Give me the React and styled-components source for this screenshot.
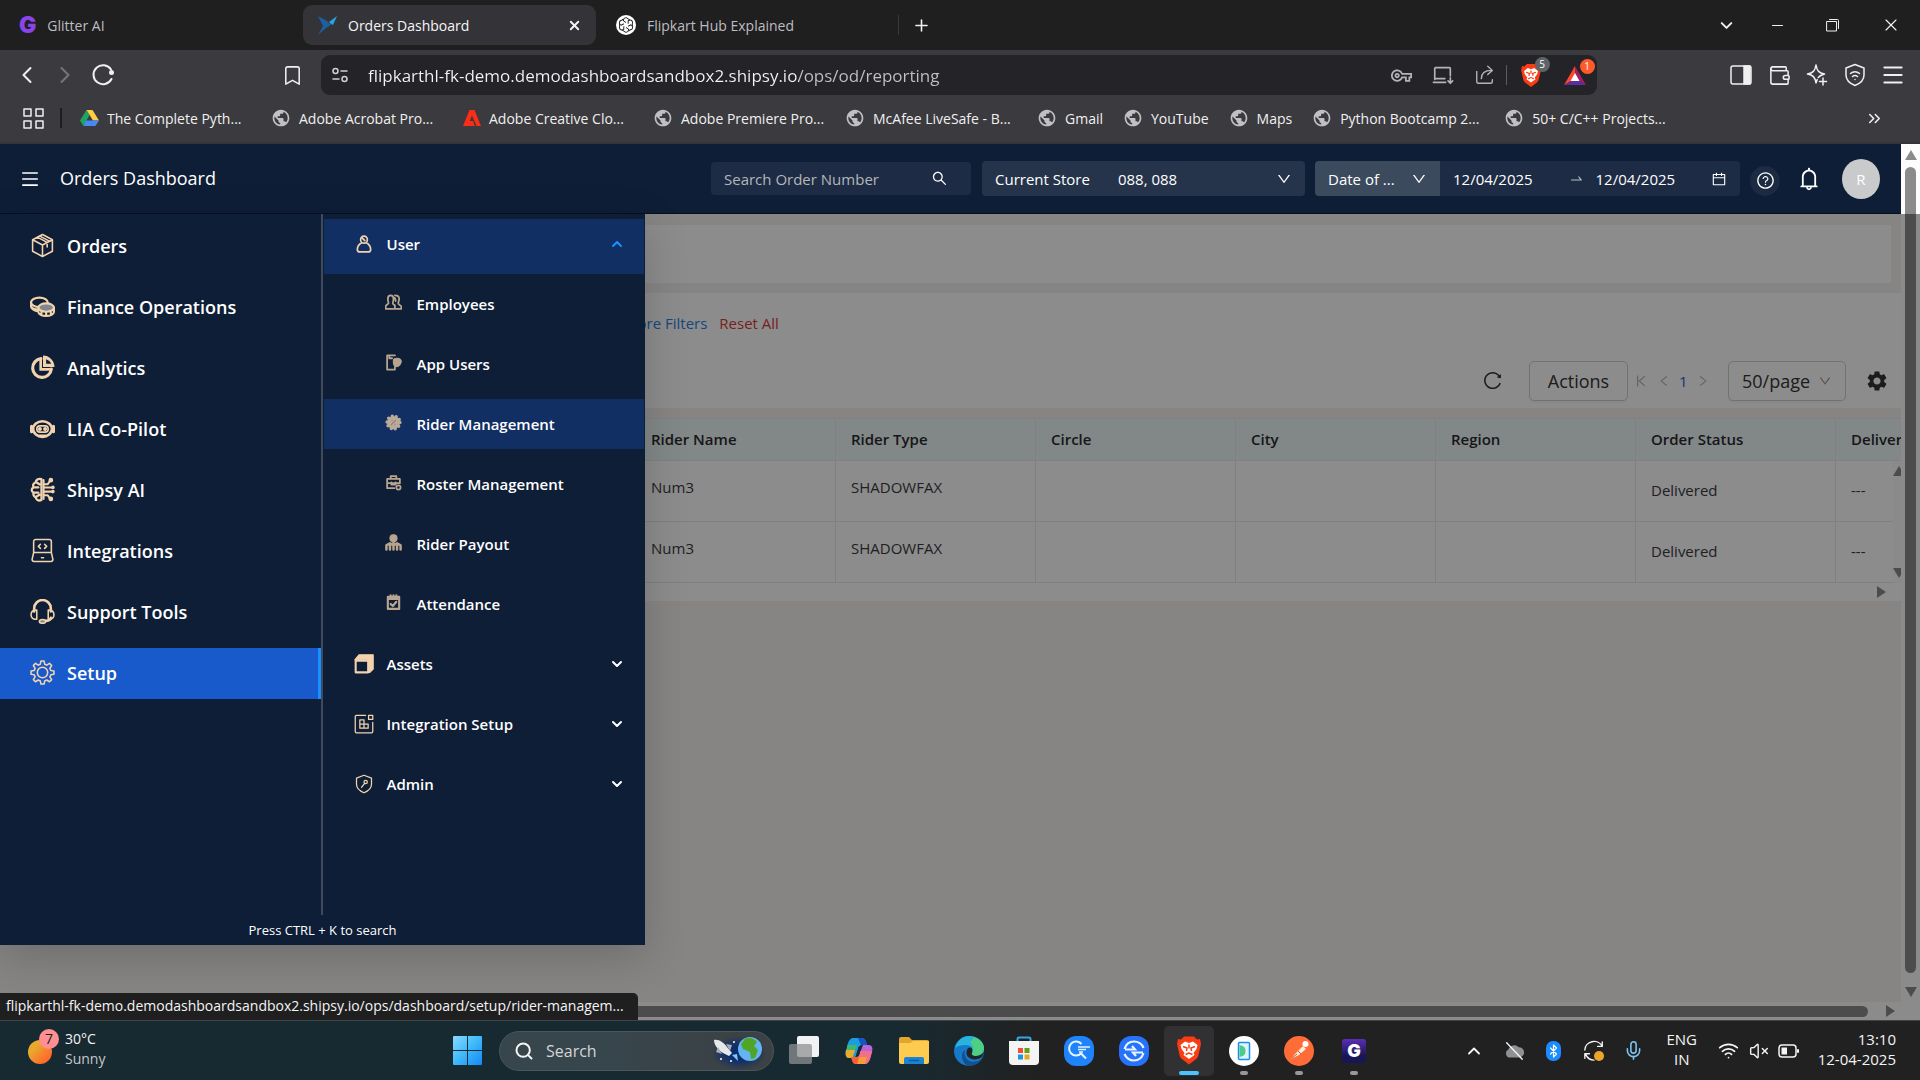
import React from 'react';
import styled, { createGlobalStyle } from 'styled-components';
import {
  AiOutlineBell,
  AiOutlineCalendar,
  AiOutlineDown,
  AiOutlineLeft,
  AiOutlineMenu,
  AiOutlineQuestionCircle,
  AiOutlineReload,
  AiOutlineRight,
  AiOutlineSearch,
  AiOutlineSwapRight,
  AiOutlineVerticalRight,
} from 'react-icons/ai';
import { MdPublic, MdOutlineVpnKey, MdSettings } from 'react-icons/md';
import {
  Bookmark,
  ChevronDown,
  ChevronLeft,
  ChevronRight,
  ChevronUp,
  ChevronsRight,
  Menu,
  Mic,
  Minus,
  Plus,
  Search,
  VolumeX,
  Wallet,
  Wifi,
  X,
} from 'lucide-react';

const GlobalStyle = createGlobalStyle`
  * { box-sizing: border-box; }
  body {
    margin: 0;
    background: #1f1f20;
    font-family: 'Open Sans', 'Noto Sans', sans-serif;
  }
  button, input, select {
    font: inherit;
    color: inherit;
    background: none;
    border: 0;
    padding: 0;
    margin: 0;
    min-width: 0;
    outline: none;
  }
  select { appearance: none; }
  a { color: inherit; text-decoration: none; }
  svg { display: block; flex: none; }
`

const Desktop = styled.div`
  display: flex;
  flex-direction: column;
  min-height: 100vh;
  overflow: hidden;
`

/* ---------- browser chrome ---------- */

const Chrome = styled.header`
  color: #f0f0f1;
  background: #3b3a3e;
  border-bottom: 2px solid #363537;
`

const TabStrip = styled.div`
  display: flex;
  align-items: center;
  height: 50px;
  padding-left: 5px;
  background: #1f1f20;
`

const Tab = styled.button`
  display: flex;
  align-items: center;
  gap: 11px;
  flex: 0 1 ${p => p.$width}px;
  height: 40px;
  padding: 0 14px;
  margin-right: ${p => (p.$active ? 6 : 0)}px;
  border-radius: 9px;
  font-size: 14px;
  text-align: left;
  color: ${p => (p.$active ? '#f6f6f7' : '#bdbdc0')};
  background: ${p => (p.$active ? '#343338' : 'transparent')};
`

const TabTitle = styled.span`
  flex: 1;
  white-space: nowrap;
`

const IconButton = styled.button`
  display: flex;
  align-items: center;
  justify-content: center;
  flex: none;
  width: ${p => p.$width || 38}px;
  height: 38px;
  color: ${p => p.$color || '#f0f0f1'};
`

const Divider = styled.span`
  width: ${p => p.$thick || 1}px;
  height: 20px;
  background: ${p => p.$color || '#5c5b60'};
`

const WindowButtons = styled.div`
  display: flex;
  margin-left: auto;
`

const Toolbar = styled.div`
  display: flex;
  align-items: center;
  height: 50px;
  padding: 0 8px;
`

const ToolGap = styled.span`
  flex: none;
  width: ${p => p.$width}px;
`

const AddressBar = styled.div`
  display: flex;
  align-items: center;
  flex: 1;
  height: 40px;
  margin-left: 10px;
  padding: 0 2px 0 10px;
  border-radius: 9px;
  background: #242328;
`

const Url = styled.input`
  flex: 1;
  height: 30px;
  margin-left: 19px;
  font-size: 17px;
  color: transparent;
  background: linear-gradient(90deg, #f4f4f5 431px, #c2c2c6 431px);
  background-clip: text;
`

const Badged = styled.span`
  position: relative;
  display: flex;
`

const Badge = styled.span`
  position: absolute;
  top: -7px;
  right: -9px;
  width: 15px;
  height: 15px;
  border-radius: 8px;
  font-size: 10px;
  line-height: 15px;
  text-align: center;
  color: #fff;
  background: ${p => p.$color};
`

const SideTools = styled.div`
  display: flex;
  margin-left: 125px;
`

const Bookmarks = styled.nav`
  display: flex;
  align-items: center;
  gap: 20px;
  height: 42px;
  padding: 0 36px 6px 23px;
  font-size: 14px;
  white-space: nowrap;
`

const BookmarkLead = styled.div`
  display: flex;
  align-items: center;
  gap: 16px;
  margin-right: -2px;
`

const BookmarkLink = styled.a`
  display: flex;
  align-items: center;
  gap: 8px;

  span { min-width: ${p => (p.$long ? 144 : 0)}px; }
`

const More = styled.button`
  margin-left: auto;
`

/* ---------- application ---------- */

const Viewport = styled.main`
  position: relative;
  display: flex;
  flex: 1;
`

const Page = styled.div`
  display: flex;
  flex-direction: column;
  flex: 1;
  min-width: 0;
  background: #f6f3ef;
`

const AppHeader = styled.div`
  display: flex;
  align-items: center;
  height: 70px;
  padding: 0 21px 0 20px;
  color: #fff;
  background: #0e1e37;
  border-bottom: 1px solid #08101f;
`

const AppTitle = styled.h1`
  margin: 0 auto 0 20px;
  padding-bottom: 2px;
  font-size: 18px;
  font-weight: 400;
`

const HeaderField = styled.div`
  display: flex;
  align-items: center;
  width: ${p => p.$width}px;
  height: ${p => p.$height || 35}px;
  padding: 0 13px;
  margin-right: ${p => p.$gap || 0}px;
  font-size: 15px;
  border-radius: ${p => p.$radius || '4px'};
  background: ${p => p.$bg};

  label { margin-right: 28px; white-space: nowrap; }
  input, select { flex: 1; width: 0; }
  input::placeholder { color: #b3b6bb; opacity: 1; }
`

const HelpButton = styled.button`
  display: grid;
  place-items: center;
  width: 30px;
  height: 30px;
  margin: 4px 16px 0 10px;
  border-radius: 50%;
  background: #1c2a42;
`

const Avatar = styled.button`
  width: 38px;
  height: 40px;
  margin-left: 20px;
  border-radius: 50%;
  font-size: 15px;
  color: #fff;
  background: #c9cacb;
`

const Card = styled.section`
  margin: ${p => p.$margin};
  height: ${p => p.$height}px;
  background: #fff;
`

const Filters = styled.div`
  display: flex;
  gap: 12px;
  height: 60px;
  padding-left: 624px;
  align-items: center;
  font-size: 15px;
`

const FilterLink = styled.button`
  white-space: nowrap;
  color: ${p => p.$color};
`

const TableTools = styled.div`
  display: flex;
  align-items: center;
  justify-content: flex-end;
  height: 55px;
  padding-right: 12px;
  font-size: 18px;
  color: #333;
`

const Outlined = styled.div`
  display: flex;
  align-items: center;
  justify-content: ${p => (p.$spread ? 'space-between' : 'center')};
  width: ${p => p.$width}px;
  height: 40px;
  padding: 0 13px;
  border: 1px solid #d0d0d0;
  border-radius: 5px;
  box-shadow: 0 2px 0 rgba(0, 0, 0, .03);
`

const Pager = styled.div`
  display: flex;
  align-items: center;
  gap: 8px;
  width: 100px;
  padding-left: 5px;
  font-size: 15px;
  color: #b8b8b8;

  strong { font-weight: 500; color: #1f5fd0; }
`

const TableWrap = styled.div`
  position: relative;
  overflow: hidden;
  background: #fff;
`

const Table = styled.table`
  width: 2035px;
  table-layout: fixed;
  border-collapse: collapse;
  font-size: 15px;
  text-align: left;

  col { width: 200px; }
  col:first-child { width: 635px; }
  tr { height: 61px; }
  thead tr { height: 42px; background: #edf7f7; }
  th { font-weight: 600; color: #2b2b30; }
  th, td {
    padding: 0 15px;
    border: 1px solid #e9eaec;
  }
  th { padding-bottom: 2px; }
  td { padding-bottom: 8px; color: #3b3b3f; }
  td:nth-last-child(-n + 2) { padding-bottom: 3px; }
`

const TableTrack = styled.div`
  display: flex;
  justify-content: flex-end;
  align-items: center;
  height: 18px;
  padding-right: 15px;
`

const RowTrack = styled.div`
  position: absolute;
  top: 43px;
  right: 0;
  bottom: 18px;
  width: 8px;
  padding: 5px 0;
  display: flex;
  flex-direction: column;
  justify-content: space-between;
  overflow: hidden;
  background: #fcfcfc;
`

const Arrow = styled.i`
  flex: none;
  width: 0;
  height: 0;
  border: 6px solid transparent;
  ${p => p.$dir === 'up' && 'border-top: 0; border-bottom: 10px solid #8b8b8b;'}
  ${p => p.$dir === 'down' && 'border-bottom: 0; border-top: 10px solid #8b8b8b;'}
  ${p => p.$dir === 'right' && 'border-right: 0; border-left: 9px solid #8b8b8b;'}
`

const ScrollY = styled.div`
  display: flex;
  flex-direction: column;
  align-items: center;
  gap: 7px;
  width: 19px;
  padding: 6px 0 23px;
  background: #fdfdfd;
`

const ScrollX = styled.div`
  display: flex;
  align-items: center;
  gap: 18px;
  height: 18px;
  margin-top: auto;
  padding: 0 6px 0 20px;
  background: #fdfdfd;
`

const Thumb = styled.div`
  flex: 1;
  min-width: 11px;
  min-height: 11px;
  border-radius: 6px;
  background: #8b8b8b;
`

const Mask = styled.div`
  position: absolute;
  inset: 70px 0 0;
  background: rgba(0, 0, 0, .45);
`

const Drawer = styled.nav`
  position: absolute;
  top: 70px;
  left: 0;
  width: 645px;
  color: #fff;
  background: #0e1e37;
  box-shadow: 0 12px 40px rgba(0, 0, 0, .18);
`

const Columns = styled.div`
  display: flex;
  min-height: 701px;
`

const Primary = styled.div`
  display: flex;
  flex-direction: column;
  gap: 10px;
  flex: 1;
  padding-top: 7px;
  border-right: 2px solid #414a5c;
`

const PrimaryItem = styled.a`
  display: flex;
  align-items: center;
  gap: 12px;
  height: 51px;
  padding: 0 0 2px 30px;
  font-size: 18px;
  font-weight: 600;
  background: ${p => (p.$active ? '#185acb' : 'transparent')};
  border-right: ${p => (p.$active ? '3px solid #1890ff' : '0')};
`

const Secondary = styled.div`
  display: flex;
  flex-direction: column;
  gap: 10px;
  flex: 1;
  padding: 5px 1px 0;
  font-size: 15px;
  font-weight: 600;
`

const Group = styled.button`
  display: flex;
  align-items: center;
  gap: 13px;
  height: ${p => (p.$open ? 55 : 50)}px;
  margin-bottom: ${p => (p.$open ? -5 : 0)}px;
  padding: 0 19px ${p => (p.$open ? 5 : 0)}px 30px;
  text-align: left;
  background: ${p => (p.$open ? '#112f63' : 'transparent')};

  span { flex: 1; }
`

const SubItem = styled.a`
  display: flex;
  align-items: center;
  gap: 15px;
  height: 50px;
  padding-left: 61px;
  background: ${p => (p.$active ? '#112f63' : 'transparent')};

  svg { opacity: .75; margin-bottom: 3px; }
`

const Hint = styled.p`
  margin: 0;
  height: 30px;
  font-size: 13px;
  line-height: 30px;
  text-align: center;
`

const StatusBubble = styled.div`
  position: absolute;
  left: 0;
  bottom: 0;
  min-width: 638px;
  height: 27px;
  padding: 0 7px 0 6px;
  border-radius: 0 5px 0 0;
  font-size: 14px;
  line-height: 26px;
  color: #f4f4f5;
  background: #1f1f20;
`

/* ---------- taskbar ---------- */

const Taskbar = styled.footer`
  display: flex;
  align-items: center;
  gap: 5px;
  height: 60px;
  font-size: 15px;
  color: #f4f4f4;
  background: linear-gradient(90deg, #182a31 0, #182a31 47%, #212121 54%);
  border-top: 1px solid #3d4547;
`

const Weather = styled.button`
  display: flex;
  gap: 6px;
  flex: 0 1 437px;
  padding: 0 0 4px 27px;
  text-align: left;
  font-size: 14px;
  line-height: 20px;

  small { display: block; font-size: 14px; color: #c3c8ca; }
`

const TaskSearch = styled.label`
  display: flex;
  align-items: center;
  gap: 12px;
  width: 275px;
  height: 40px;
  margin-left: 2px;
  padding: 0 8px 0 14px;
  border-radius: 20px;
  border: 1px solid #4a565c;
  background: linear-gradient(90deg, #37454c 40%, #3c4144);
  font-size: 16px;

  input { flex: 1; width: 0; }
  input::placeholder { color: #d3d6d8; opacity: 1; }
`

const TaskButton = styled.button`
  position: relative;
  display: grid;
  place-items: center;
  width: 50px;
  height: 50px;
  border-radius: 5px;
  background: ${p => (p.$active ? '#313134' : 'transparent')};

  &:after {
    content: '';
    position: absolute;
    bottom: 1px;
    width: ${p => (p.$active ? 20 : 8)}px;
    height: 4px;
    border-radius: 2px;
    background: ${p => (p.$active ? '#4cc2ff' : p.$running ? '#97989b' : 'transparent')};
  }
`

const Tray = styled.div`
  display: flex;
  align-items: center;
  margin-left: auto;
  padding-right: 24px;
  line-height: 20px;
`

const TrayIcon = styled.button`
  display: grid;
  place-items: center;
  width: ${p => p.$width || 40}px;
  height: 40px;
`

const Language = styled.button`
  width: 56px;
  padding-bottom: 3px;
  text-align: center;
`

const Clock = styled.time`
  margin-left: 14px;
  padding-bottom: 3px;
  text-align: right;
`

const GMark = styled.span`
  font-family: Inter, sans-serif;
  font-weight: 900;
  line-height: 1;
  font-size: ${p => p.$size}px;
  color: ${p => p.$color};
`

const GTile = styled.span`
  display: grid;
  place-items: center;
  width: 24px;
  height: 24px;
  border-radius: 3px;
  background: linear-gradient(#5b2fb5, #181655 70%);
`

/* ---------- drawings ---------- */

const beige = '#f2d3ad';

const Svg = ({ size = 24, w, h, box = '0 0 24 24', children, ...rest }) => (
  <svg width={w || size} height={h || size} viewBox={box} fill="none" stroke="currentColor"
    strokeWidth="1.5" strokeLinecap="round" strokeLinejoin="round" aria-hidden="true" {...rest}>
    {children}
  </svg>
);

const menuArt = {
  box: (
    <>
      <path d="M12 1.500 21.500 6.500v11L12 22.500 2.500 17.500v-11zM2.500 6.500 12 11.500l9.500-5M12 11.500v11M7 4l9.500 5v4.500" />
      <path d="M9.500 3 19 8" />
    </>
  ),
  coins: (
    <>
      <ellipse cx="9" cy="8" rx="8" ry="4.500" strokeWidth="2" />
      <path d="M1 8v4c0 2 3 4 6 4.500M1 11c0 2 3 3.500 6 4" strokeWidth="2" />
      <ellipse cx="15.500" cy="13" rx="7.500" ry="4" strokeWidth="2" fill="#7f8794" />
      <path d="M8 13v4c0 2.500 3.500 4 7.500 4s7.500-1.500 7.500-4v-4M11 17v3M15.500 17.500V21M20 17v3" strokeWidth="2" />
    </>
  ),
  pie: (
    <>
      <path d="M10.500 3.500A9 9 0 1 0 20.500 13.500" strokeWidth="3" />
      <path d="M9 4h2.500v8.500H20V15H9z" fill="currentColor" stroke="none" />
      <path d="M12.500.5A11 11 0 0 1 23.500 11.500h-11z" fill="currentColor" stroke="none" />
      <path d="M15.500 4a8 8 0 0 1 5 4.500h-5z" fill="#0e1e37" stroke="none" />
    </>
  ),
  bot: (
    <>
      <path d="M1.500 10v5M22.500 10v5" strokeWidth="3" />
      <ellipse cx="12" cy="12.500" rx="9" ry="7.500" strokeWidth="2.500" />
      <rect x="6.500" y="9.500" width="11" height="6" rx="3" />
      <circle cx="9.500" cy="12.500" r="1.200" fill="currentColor" />
      <circle cx="14.500" cy="12.500" r="1.200" fill="currentColor" />
      <path d="M9 18.500h6" />
    </>
  ),
  brain: (
    <>
      <path d="M11 2C8 1 5.500 3 5.500 5 3 6 2.500 8 3.500 10 1 11 1 14 3.500 15c-.8 2 .5 4 2 4.500 0 2 2.500 4 5.500 2.500zM3.500 10H8M3.500 15H8M6 5l3 2M6 19l3-2" strokeWidth="2.200" />
      <path d="M13 3v18M13 7h4l2-3M13 10h9M13 14h9M13 17.500h4l2 3" strokeWidth="2" />
      <circle cx="20" cy="3" r="1.500" fill="currentColor" />
      <circle cx="20" cy="21" r="1.500" fill="currentColor" />
      <circle cx="22" cy="10" r="1" fill="currentColor" />
      <circle cx="22" cy="14" r="1" fill="currentColor" />
    </>
  ),
  laptop: (
    <>
      <path d="M3.500 14V3.500a2 2 0 0 1 2-2h13a2 2 0 0 1 2 2V14M3.500 14h17l1.500 6.500a2 2 0 0 1-2 2H4a2 2 0 0 1-2-2zM11 19h2" />
      <path d="m10 6-2 2 2 2M14 6l2 2-2 2" />
    </>
  ),
  headset: (
    <>
      <path d="M4 12V9a8 8 0 0 1 16 0v3M20 18c0 2-3 3-6 3" strokeWidth="2.500" />
      <path d="M6.500 10.500v9C3 19.500 1 18 1 15s2-4.500 5.500-4.500zM17.500 10.500v9c3.500 0 5.500-1.500 5.500-4.500s-2-4.500-5.500-4.500z" />
      <ellipse cx="12" cy="21.500" rx="3" ry="1.800" fill="#7f8794" />
    </>
  ),
  gear: (
    <>
      <path d="M10.500 1h3l.6 3 2 .9 2.600-1.700 2.100 2.100L19.100 8l.9 2.100 3 .5v3l-3 .5-.9 2.100 1.700 2.600-2.100 2.100-2.600-1.700-2 .9-.6 3h-3l-.6-3-2-.9-2.600 1.700-2.100-2.100L4.900 16.200 4 14.100l-3-.5v-3l3-.5L4.900 8 3.200 5.300l2.100-2.100L7.900 4.900l2-.9z" />
      <circle cx="12" cy="12" r="5" />
    </>
  ),
  user: <path d="M12 2.500a4 4.200 0 1 1 0 8.500 4 4.200 0 0 1 0-8.500zM9 10.500c-3 2-5 5-5 8 0 2 1 3 3 3h10c2 0 3-1 3-3 0-3-2-6-5-8M10 5l3 3" strokeWidth="2" />,
  users: <path d="M8 2c3 0 4 2 4 5s-1 5-1 6 1 2 3 3v5H1v-4c1-2 4-3 4-4S4 10 4 7s1-5 4-5zM14 2c4 0 6 2 6 5s-2 5-1 7 4 2 4 4v3h-9M12 5c2 0 3 2 3 5" strokeWidth="2.500" />,
  appUser: (
    <>
      <path d="M14 2H3v20h11v-4M6 2v4h4" strokeWidth="2.500" />
      <path d="M12 8c1-3 10-3 11 2 0 4-3 8-7 8-3-1-5-5-4-10z" fill="currentColor" />
    </>
  ),
  rider: (
    <>
      <circle cx="12" cy="12" r="9" fill="currentColor" stroke="none" />
      <circle cx="12" cy="12" r="9" strokeWidth="5" strokeDasharray="0 5.650" />
      <path d="m9 15 6-6M10 9h.1M14 15h.1" stroke="#b39a7c" />
    </>
  ),
  roster: (
    <>
      <path d="M3 7h18v6H3zM3 13v7h10M8 7V3h8v4M9 12v3h6v-3" strokeWidth="2.500" />
      <circle cx="19" cy="19" r="3" strokeWidth="2.500" />
    </>
  ),
  payout: (
    <>
      <circle cx="12" cy="6" r="5" fill="currentColor" />
      <path d="M12 11v5M2 22v-6l5-3 5 3 5-3 5 3v6M7 17v5M12 18v4M17 17v5" strokeWidth="3.500" />
    </>
  ),
  attendance: <path d="M4 4h16v17H4zM4 7h16M8 2v3M12 2v3M16 2v3M8 14l3 3 5-6" strokeWidth="3" />,
  assets: (
    <>
      <path d="M6 1h17v17l-4 4h-2V7H1z" fill="currentColor" />
      <path d="M2 8h15v14H2z" fill="#0e1e37" strokeWidth="2.500" />
    </>
  ),
  blocks: (
    <>
      <path d="M14 1.500H3A1.500 1.500 0 0 0 1.500 3v18A1.500 1.500 0 0 0 3 22.500h18a1.500 1.500 0 0 0 1.500-1.500V10M17.500 1.500h5v5h-5z" />
      <path d="M7 7h5v10H7zM7 12h10v5H7z" />
    </>
  ),
  shield: <path d="M12 1.500 21 5v7c0 5-4 8.500-9 10.500C7 20.500 3 17 3 12V5zM9 16l4-5" />,
};

const MenuIcon = ({ name, size }) => (
  <Svg size={size} color={beige}>
    {menuArt[name]}
    {name === 'shield' && <circle cx="14" cy="9.500" r="2" />}
  </Svg>
);

const ShipsyLogo = () => (
  <svg width="20" height="20" viewBox="0 0 20 20" aria-hidden="true">
    <path d="M1 1 10 6l4 4-5 3-8 7 5-9z" fill="#1d5f9f" />
    <path d="m12 7 8-6-4 9-2-1z" fill="#25a5e6" />
  </svg>
);

const ChatLogo = () => (
  <svg width="20" height="20" viewBox="0 0 20 20" aria-hidden="true">
    <circle cx="10" cy="10" r="10" fill="#fff" />
    <g fill="none" stroke="#222" strokeWidth="1">
      {[0, 60, 120, 180, 240, 300].map(a => (
        <path key={a} d="M10 7.500 7.500 6V4.800A2.500 2.500 0 0 1 12 3.800l2 1.200" transform={`rotate(${a} 10 10)`} />
      ))}
    </g>
  </svg>
);

const DriveLogo = () => (
  <svg width="19" height="18" viewBox="0 0 19 18" aria-hidden="true">
    <path d="M6.500 1 9.500 6 3.500 17 0 11.500z" fill="#1fa463" />
    <path d="M6.500 1h6L19 11.500h-6z" fill="#ffcf48" />
    <path d="M6 11.500h13L15.500 17h-12z" fill="#4688f4" />
  </svg>
);

const AdobeLogo = () => (
  <svg width="18" height="18" viewBox="0 0 18 18" aria-hidden="true">
    <path d="M6.500 1h5L18 17h-4.500L9 6.500 6.800 12H10l1.800 5H0z" fill="#fa2d16" />
  </svg>
);

const BatLogo = () => (
  <svg width="22" height="19" viewBox="0 0 22 19" aria-hidden="true">
    <path d="M11 0 0 19l11-6z" fill="#ff4724" />
    <path d="m11 0 11 19-11-6z" fill="#9e1f63" />
    <path d="M0 19h22l-11-6.500z" fill="#5b2da0" />
    <path d="m11 7 4.500 8h-9z" fill="#fff" />
  </svg>
);

const WinLogo = () => (
  <svg width="29" height="29" viewBox="0 0 29 29" aria-hidden="true">
    <defs>
      <linearGradient id="win" x1="0" y1="0" x2="1" y2="1">
        <stop offset="0" stopColor="#8cd8ff" />
        <stop offset=".45" stopColor="#43bdfb" />
        <stop offset="1" stopColor="#1388f5" />
      </linearGradient>
    </defs>
    <path d="M0 1a1 1 0 0 1 1-1h13v14H0zM15 0h13a1 1 0 0 1 1 1v13H15zM0 15h14v14H1a1 1 0 0 1-1-1zM15 15h14v13a1 1 0 0 1-1 1H15z" fill="url(#win)" />
  </svg>
);

const SearchDoodle = () => (
  <svg width="56" height="36" viewBox="0 0 56 36" aria-hidden="true">
    <defs>
      <radialGradient id="sky">
        <stop offset=".4" stopColor="#0d2d6e" />
        <stop offset="1" stopColor="#0d2d6e" stopOpacity="0" />
      </radialGradient>
    </defs>
    <ellipse cx="30" cy="20" rx="28" ry="17" fill="url(#sky)" />
    <circle cx="41" cy="16" r="12" fill="#63b4f0" />
    <path d="M36 6c4-2 9-1 12 3l-3 4 4 4-3 8-4 1-1-7-7-3-2-5z" fill="#4fa524" />
    <path d="M5 7c5-1 10 3 13 7l5 6-3 3-6-3C9 17 5 12 5 7z" fill="#e6e7ea" />
    <path d="m9 14-2 5 6 2zM17 11l6 1-2 6z" fill="#a9adb5" />
    <path d="m23 22 6 6-1-7z" fill="#7ec8ff" />
    <g fill="#fff">
      <circle cx="12" cy="26" r="1" /><circle cx="25" cy="9" r="1" /><circle cx="22" cy="28" r="1" />
    </g>
  </svg>
);

const CopilotLogo = () => (
  <svg width="28" height="28" viewBox="0 0 28 28" aria-hidden="true">
    <path d="M8 1h9c2 0 3 1 4 4l1 3h-5c-2 0-3 1-4 4l-3 9H4c-3 0-4-3-3-7l2-8c1-3 3-5 5-5z" fill="#1b9de2" />
    <path d="M2.500 8H12l-3 8H.800z" fill="#45b66f" />
    <path d="M1 13h9l-2.500 8H4c-3 0-4-3-3-8z" fill="#e6ae2d" />
    <path d="M13 1h4c2 0 3 1 4 4l1 3h-6z" fill="#1656c4" />
    <path d="M18 8h6c3 0 4 3 3 7l-2 7c-1 3-3 5-5 5h-9c-2 0-3-1-4-4l-1-3h5c2 0 3-1 4-4z" fill="#b566dd" />
    <path d="M15 14h12.200L25 22c-1 3-3 5-5 5h-7z" fill="#f0708a" />
    <path d="M13.500 20H22l-2 7h-8z" fill="#f79b3c" />
    <path d="M6 20h6c2 0 3-1 3-3l-3 10h-1c-2 0-3-1-4-4z" fill="#fb5f2b" />
    <path d="m13.500 10 3-1-2 8-3 1z" fill="#1b2a31" />
  </svg>
);

const FolderLogo = () => (
  <svg width="30" height="28" viewBox="0 0 30 28" aria-hidden="true">
    <path d="M0 2a2 2 0 0 1 2-2h8l3 3h15a2 2 0 0 1 2 2v10H0z" fill="#e3a52b" />
    <path d="M0 6h11l3-2h16v21a2 2 0 0 1-2 2H2a2 2 0 0 1-2-2z" fill="#fccb4f" />
    <path d="M5 27v-5a2 2 0 0 1 2-2h16a2 2 0 0 1 2 2v5z" fill="#1b83d4" />
    <path d="M10 23.500h10" stroke="#0d5aa0" strokeWidth="1.500" />
  </svg>
);

const EdgeLogo = () => (
  <svg width="30" height="30" viewBox="0 0 30 30" aria-hidden="true">
    <circle cx="15" cy="15" r="15" fill="#1679c9" />
    <path d="M1 12C3 5 8 0 15 0c9 0 15 6 15 12 0 5-4 8-8 8-3 0-5-1-4-3 2-4-1-8-6-8-5 0-9 1-11 3z" fill="#27b3dc" />
    <path d="M20 1c6 2 10 7 10 11 0 5-4 8-8 8-3 0-5-1-4-3 3-6 0-9-2-10z" fill="#4fcf80" />
    <path d="M11 14c-2 8 4 14 13 11 2-1 4-3 4-3-3 5-8 8-13 8C9 29 5 18 11 14z" fill="#174f8d" />
    <path d="M14 12c4-2 5 2 4 5-1 2 1 3 4 3 2 0 5-1 8-4l-2 5c-8 6-20 0-14-9z" fill="#1e2628" />
  </svg>
);

const StoreLogo = () => (
  <svg width="30" height="30" viewBox="0 0 30 30" aria-hidden="true">
    <path d="M8.500 7V3A1.500 1.500 0 0 1 10 1.500h10A1.500 1.500 0 0 1 21.500 3v4" fill="none" stroke="#35a7e6" strokeWidth="2" />
    <path d="M0 5h30v20a4 4 0 0 1-4 4H4a4 4 0 0 1-4-4z" fill="#f4f4f4" />
    <path d="M9 12h5v5H9z" fill="#f1502f" />
    <path d="M15.500 12h5v5h-5z" fill="#5fa018" />
    <path d="M9 18.500h5v5H9z" fill="#1f94e0" />
    <path d="M15.500 18.500h5v5h-5z" fill="#e8a823" />
  </svg>
);

const TaskViewLogo = () => (
  <svg width="30" height="29" viewBox="0 0 30 29" aria-hidden="true">
    <rect x="8" y="0" width="22" height="21" rx="2" fill="#f1f2f4" />
    <rect x="0" y="8" width="23" height="20" rx="2" fill="#8d9093" fillOpacity=".75" />
  </svg>
);

const BlueSearchLogo = () => (
  <svg width="30" height="30" viewBox="0 0 30 30" fill="none" stroke="#e6f4ff" strokeWidth="2" aria-hidden="true">
    <rect width="30" height="30" rx="12" fill="#1f83fb" stroke="none" />
    <path d="M17.500 8A7 7 0 1 0 17 17.500l5 5" />
    <path d="M14 11h12M14 13.500h8M15 16h4" strokeWidth="1.500" />
  </svg>
);

const BlueSyncLogo = () => (
  <svg width="30" height="30" viewBox="0 0 30 30" fill="none" stroke="#e6f4ff" strokeWidth="2.200" aria-hidden="true">
    <rect width="30" height="30" rx="12" fill="#2672fa" stroke="none" />
    <path d="M5.500 13C7 8 11 5.500 15 5.500S23 8 24.500 12M24.500 17c-1.500 5-5.500 7.500-9.500 7.500S7 22 5.500 18M6 13.500h10l-3-3.500M24 16.500H14l3 3.500" />
  </svg>
);

const BraveLogo = ({ w = 24, h = 29 }) => (
  <svg width={w} height={h} viewBox="0 0 24 28" aria-hidden="true">
    <path d="M7 0h10l3 3 3-.5 1 5-2.500 11c-.5 2-1 3-3 4.500L12 28l-6.500-5c-2-1.500-2.500-2.500-3-4.500L0 7.500l1-5L4 3z" fill="#fb3b12" />
    <path d="M12 6.500 8 5 3.500 8.500l1 4 3 4-1 2 5.500 4 5.500-4-1-2 3-4 1-4L16 5z" fill="#fff" />
    <path d="m6 10 4 1.500-.5 3M18 10l-4 1.500.5 3M8.500 18l3.500-1.500 3.500 1.500M12 8v4" fill="none" stroke="#fb3b12" strokeWidth="1.500" />
  </svg>
);

const LinkLogo = () => (
  <svg width="30" height="30" viewBox="0 0 30 30" aria-hidden="true">
    <circle cx="15" cy="15" r="15" fill="#fff" />
    <rect x="9.500" y="6.500" width="11" height="17" rx="1" fill="#dff2ff" stroke="#1b8ff0" strokeWidth="1.500" />
    <path d="M10.500 9c5 1 6 3 6 6s-1 5-6 6z" fill="#4dcc84" />
  </svg>
);

const PostLogo = () => (
  <svg width="30" height="30" viewBox="0 0 30 30" aria-hidden="true">
    <circle cx="15" cy="15" r="15" fill="#ff6c37" />
    <circle cx="21.500" cy="8" r="3" fill="#fff" />
    <path d="m19 10 3 3-7 6-8 4 4-5z" fill="#fbe9d9" />
    <path d="m14 15 3 3M8 22l5-4" stroke="#c75b30" />
  </svg>
);

const SunIcon = () => (
  <svg width="32" height="38" viewBox="0 0 32 38" aria-hidden="true">
    <defs>
      <linearGradient id="sun" x1="0" y1="0" x2="1" y2="1">
        <stop offset=".3" stopColor="#e9a92c" />
        <stop offset=".8" stopColor="#ff692d" />
      </linearGradient>
    </defs>
    <circle cx="13" cy="23" r="12" fill="url(#sun)" />
    <circle cx="22" cy="10" r="10" fill="#ff8f92" />
    <text x="22" y="15" textAnchor="middle" fontSize="14" fill="#222">7</text>
  </svg>
);

const bookmarks = [
  { label: 'The Complete Pyth...', icon: <DriveLogo /> },
  { label: 'Adobe Acrobat Pro...' },
  { label: 'Adobe Creative Clo...', icon: <AdobeLogo /> },
  { label: 'Adobe Premiere Pro...' },
  { label: 'McAfee LiveSafe - B...' },
  { label: 'Gmail' },
  { label: 'YouTube' },
  { label: 'Maps' },
  { label: 'Python Bootcamp 2...' },
  { label: '50+ C/C++ Projects...' },
];

const primary = [
  ['Orders', 'box'],
  ['Finance Operations', 'coins'],
  ['Analytics', 'pie'],
  ['LIA Co-Pilot', 'bot'],
  ['Shipsy AI', 'brain'],
  ['Integrations', 'laptop'],
  ['Support Tools', 'headset'],
  ['Setup', 'gear'],
];

const userItems = [
  ['Employees', 'users'],
  ['App Users', 'appUser'],
  ['Rider Management', 'rider'],
  ['Roster Management', 'roster'],
  ['Rider Payout', 'payout'],
  ['Attendance', 'attendance'],
];

const groups = [
  ['Assets', 'assets'],
  ['Integration Setup', 'blocks'],
  ['Admin', 'shield'],
];

const columns = ['', 'Rider Name', 'Rider Type', 'Circle', 'City', 'Region', 'Order Status', 'Deliver'];
const rows = [
  ['', 'Num3', 'SHADOWFAX', '', '', '', 'Delivered', '---'],
  ['', 'Num3', 'SHADOWFAX', '', '', '', 'Delivered', '---'],
];

const BrowserChrome = () => (
  <Chrome>
    <TabStrip>
      <Tab $width={298}><GMark $size={23} $color="#8a45ea">G</GMark><TabTitle>Glitter AI</TabTitle></Tab>
      <Tab $width={293} $active>
        <ShipsyLogo /><TabTitle>Orders Dashboard</TabTitle><X size={15} strokeWidth={3} />
      </Tab>
      <Tab $width={296}><ChatLogo /><TabTitle>Flipkart Hub Explained</TabTitle></Tab>
      <Divider $color="#3a3a3c" />
      <IconButton $width={44} aria-label="New tab"><Plus size={19} /></IconButton>
      <WindowButtons>
        <IconButton $width={46} aria-label="Search tabs"><ChevronDown size={19} strokeWidth={2.5} /></IconButton>
        <IconButton $width={56} aria-label="Minimize"><Minus size={17} strokeWidth={1.5} /></IconButton>
        <IconButton $width={56} aria-label="Restore">
          <Svg size={14} box="0 0 14 14" strokeWidth="1"><path d="M1 3.500h9.500V13H1zM3.500 1.500h8a1 1 0 0 1 1 1v8" /></Svg>
        </IconButton>
        <IconButton $width={59} aria-label="Close"><X size={20} strokeWidth={1.4} /></IconButton>
      </WindowButtons>
    </TabStrip>
    <Toolbar>
      <IconButton aria-label="Back"><ChevronLeft size={28} strokeWidth={1.7} /></IconButton>
      <IconButton aria-label="Forward" $color="#77767b"><ChevronRight size={28} strokeWidth={1.7} /></IconButton>
      <IconButton aria-label="Reload">
        <Svg size={24} strokeWidth="2"><path d="M20 6.500A9.500 9.500 0 1 0 20.500 16" /><circle cx="20.500" cy="9.500" r="2.500" fill="currentColor" stroke="none" /></Svg>
      </IconButton>
      <ToolGap $width={151} />
      <IconButton aria-label="Bookmark"><Bookmark size={23} strokeWidth={1.6} /></IconButton>
      <AddressBar>
        <Svg size={18} color="#d0d0d2" box="0 0 18 18">
          <circle cx="4.500" cy="5" r="2.500" /><path d="M10 5h6M2 13h6" /><circle cx="13.500" cy="13" r="2.500" />
        </Svg>
        <Url aria-label="Address" defaultValue="flipkarthl-fk-demo.demodashboardsandbox2.shipsy.io/ops/od/reporting" />
        <IconButton $width={42} aria-label="Passwords" $color="#b4b4b8"><MdOutlineVpnKey size={21} /></IconButton>
        <IconButton $width={42} aria-label="Install" $color="#b4b4b8">
          <Svg size={22} strokeWidth="1.800"><path d="M3 17V5a1 1 0 0 1 1-1h15a1 1 0 0 1 1 1v8M3 16h11M1.500 20H15M20 15v5.500M17.500 18.500l2.500 2.500 2.500-2.500" /></Svg>
        </IconButton>
        <IconButton $width={42} aria-label="Share" $color="#b4b4b8">
          <Svg size={22}><path d="M3 8v11a2 2 0 0 0 2 2h13a2 2 0 0 0 2-2v-2M8 16c0-6 3-9 11-9M15 2.500 20 7l-5 4.500" /></Svg>
        </IconButton>
        <Divider />
        <IconButton $width={47} aria-label="Shields"><Badged><BraveLogo w={20} h={23} /><Badge $color="#5e6468">5</Badge></Badged></IconButton>
        <IconButton $width={41} aria-label="Rewards"><Badged><BatLogo /><Badge $color="#ff5a2a">1</Badge></Badged></IconButton>
      </AddressBar>
      <SideTools>
        <IconButton aria-label="Sidebar">
          <Svg size={24}><rect x="2" y="3" width="20" height="18" rx="2" /><path d="M15 3h6v18h-6z" fill="currentColor" /></Svg>
        </IconButton>
        <IconButton aria-label="Wallet"><Wallet size={23} strokeWidth={1.6} /></IconButton>
        <IconButton aria-label="Leo">
          <Svg size={24}><path d="M11 2c1 6 3 8 8.500 9-3 .8-5 1.800-6.200 3.500M11 2c-1 6-3 8-8.500 9 5.500 1 7.500 3 8.500 9l1.200-3.500M18 15v7M14.500 18.500h7" /></Svg>
        </IconButton>
        <IconButton aria-label="VPN">
          <Svg size={24}><path d="M12 1.500 21 5v7c0 5-4 8.500-9 10.500C7 20.500 3 17 3 12V5zM7.500 10.500a7 7 0 0 1 9 0M9.500 13.500a4 4 0 0 1 5 0M12 16.500v.1" /></Svg>
        </IconButton>
        <IconButton aria-label="Menu"><Menu size={26} strokeWidth={1.8} /></IconButton>
      </SideTools>
    </Toolbar>
    <Bookmarks>
      <BookmarkLead>
        <Svg size={21} box="0 0 21 21">
          <path d="M1 1h7v7H1zM13 1h7v7h-7zM1 13h7v7H1zM13 13h7v7h-7z" />
        </Svg>
        <Divider $thick={2} $color="#1e1d20" />
      </BookmarkLead>
      {bookmarks.map(b => (
        <BookmarkLink key={b.label} href="#" $long={b.label.endsWith('...')}>
          {b.icon || <MdPublic size={20} color="#c0c1c3" />}
          <span>{b.label}</span>
        </BookmarkLink>
      ))}
      <More aria-label="More bookmarks"><ChevronsRight size={19} /></More>
    </Bookmarks>
  </Chrome>
);

const Header = () => (
  <AppHeader>
    <AiOutlineMenu size={20} />
    <AppTitle>Orders Dashboard</AppTitle>
    <HeaderField $width={260} $height={33} $gap={11} $bg="#1d2c44">
      <input aria-label="Search Order Number" placeholder="Search Order Number" />
      <ToolGap $width={10} />
      <AiOutlineSearch size={17} />
      <ToolGap $width={10} />
    </HeaderField>
    <HeaderField $width={323} $gap={10} $bg="#25344a">
      <label htmlFor="store">Current Store</label>
      <select id="store"><option>088, 088</option></select>
      <AiOutlineDown size={16} />
    </HeaderField>
    <HeaderField $width={125} $bg="#3c4a5d" $radius="4px 0 0 4px">
      <select aria-label="Date type"><option>Date of ...</option></select>
      <AiOutlineDown size={16} />
    </HeaderField>
    <HeaderField $width={300} $bg="#1d2c44" $radius="0 4px 4px 0">
      <input aria-label="From" defaultValue="12/04/2025" />
      <AiOutlineSwapRight size={15} color="#b8bdc5" />
      <ToolGap $width={12} />
      <input aria-label="To" defaultValue="12/04/2025" />
      <AiOutlineCalendar size={16} />
    </HeaderField>
    <HelpButton aria-label="Help"><AiOutlineQuestionCircle size={19} /></HelpButton>
    <AiOutlineBell size={26} />
    <Avatar>R</Avatar>
  </AppHeader>
);

const OrdersTable = () => (
  <TableWrap>
    <Table>
      <colgroup>{columns.map(c => <col key={c} />)}</colgroup>
      <thead>
        <tr>{columns.map(c => <th key={c}>{c}</th>)}</tr>
      </thead>
      <tbody>
        {rows.map((r, i) => (
          <tr key={i}>{r.map((c, j) => <td key={j}>{c}</td>)}</tr>
        ))}
      </tbody>
    </Table>
    <RowTrack><Arrow $dir="up" /><Arrow $dir="down" /></RowTrack>
    <TableTrack><Arrow $dir="right" /></TableTrack>
  </TableWrap>
);

const SideMenu = () => (
  <Drawer>
    <Columns>
      <Primary>
        {primary.map(([label, icon]) => (
          <PrimaryItem key={label} href="#" $active={label === 'Setup'}>
            <MenuIcon name={icon} size={25} />
            {label}
          </PrimaryItem>
        ))}
      </Primary>
      <Secondary>
        <Group $open>
          <MenuIcon name="user" size={20} />
          <span>User</span>
          <ChevronUp size={16} strokeWidth={3} color="#1890ff" />
        </Group>
        {userItems.map(([label, icon]) => (
          <SubItem key={label} href="#" $active={label === 'Rider Management'}>
            <MenuIcon name={icon} size={17} />
            {label}
          </SubItem>
        ))}
        {groups.map(([label, icon]) => (
          <Group key={label}>
            <MenuIcon name={icon} size={20} />
            <span>{label}</span>
            <ChevronDown size={16} strokeWidth={3} />
          </Group>
        ))}
      </Secondary>
    </Columns>
    <Hint>Press CTRL + K to search</Hint>
  </Drawer>
);

const WindowsBar = () => (
  <Taskbar>
    <Weather><SunIcon /><span>30°C<small>Sunny</small></span></Weather>
    <TaskButton aria-label="Start"><WinLogo /></TaskButton>
    <TaskSearch>
      <Search size={20} strokeWidth={2.4} />
      <input aria-label="Search" placeholder="Search" />
      <SearchDoodle />
    </TaskSearch>
    <TaskButton aria-label="Task view"><TaskViewLogo /></TaskButton>
    <TaskButton aria-label="Copilot"><CopilotLogo /></TaskButton>
    <TaskButton aria-label="Explorer"><FolderLogo /></TaskButton>
    <TaskButton aria-label="Edge"><EdgeLogo /></TaskButton>
    <TaskButton aria-label="Store"><StoreLogo /></TaskButton>
    <TaskButton aria-label="Find"><BlueSearchLogo /></TaskButton>
    <TaskButton aria-label="Sync"><BlueSyncLogo /></TaskButton>
    <TaskButton aria-label="Brave" $active><BraveLogo /></TaskButton>
    <TaskButton aria-label="Link" $running><LinkLogo /></TaskButton>
    <TaskButton aria-label="Postman" $running><PostLogo /></TaskButton>
    <TaskButton aria-label="Glitter" $running><GTile><GMark $size={18} $color="#fff">G</GMark></GTile></TaskButton>
    <Tray>
      <TrayIcon aria-label="Hidden icons"><ChevronUp size={20} strokeWidth={2.2} /></TrayIcon>
      <TrayIcon aria-label="OneDrive">
        <Svg size={22}>
          <path d="M6 19a5 5 0 0 1 0-9 6.500 6.500 0 0 1 11-2 5.500 5.500 0 0 1 1 11z" fill="#8f9193" stroke="none" />
          <path d="m4 3 17 18" stroke="#f4f4f4" />
        </Svg>
      </TrayIcon>
      <TrayIcon aria-label="Bluetooth">
        <Svg w={15} h={20} box="0 0 15 20">
          <rect width="15" height="20" rx="7" fill="#1a8cff" stroke="none" />
          <path d="m4.500 7 6 6L7.500 16V4l3 3-6 6" stroke="#fff" strokeWidth="1.200" />
        </Svg>
      </TrayIcon>
      <TrayIcon aria-label="Update">
        <Svg size={22}>
          <path d="M2 11a10 9.500 0 0 1 19-4M21 2v5h-5M2 20v-5h5M3 16c2 4 5 6 9 6" />
          <circle cx="17.500" cy="17.500" r="5.500" fill="#e8a62a" stroke="none" />
        </Svg>
      </TrayIcon>
      <TrayIcon aria-label="Microphone"><Mic size={21} color="#7ec3f5" strokeWidth={1.8} /></TrayIcon>
      <Language>ENG<br />IN</Language>
      <ToolGap $width={4} />
      <TrayIcon $width={30} aria-label="Wi-Fi"><Wifi size={21} /></TrayIcon>
      <TrayIcon $width={30} aria-label="Volume"><VolumeX size={20} strokeWidth={1.7} /></TrayIcon>
      <TrayIcon $width={30} aria-label="Battery">
        <Svg w={21} h={14} box="0 0 21 14">
          <rect x="1" y="1" width="17" height="12" rx="3" /><path d="M3.500 3.500H9v7H3.500z" fill="currentColor" stroke="none" /><path d="M20 6v2" strokeWidth="2" />
        </Svg>
      </TrayIcon>
      <Clock>13:10<br />12-04-2025</Clock>
    </Tray>
  </Taskbar>
);

const App = () => (
  <Desktop>
    <GlobalStyle />
    <BrowserChrome />
    <Viewport>
      <Page>
        <Header />
        <Card $margin="11px 10px 10px" $height={58} />
        <Card $margin="0 0 10px" $height={115}>
          <Filters>
            <FilterLink $color="#2a83dd">More Filters</FilterLink>
            <FilterLink $color="#d93a3a">Reset All</FilterLink>
          </Filters>
          <TableTools>
            <AiOutlineReload size={21} />
            <ToolGap $width={26} />
            <Outlined as="button" $width={99}>Actions</Outlined>
            <Pager>
              <AiOutlineVerticalRight size={16} />
              <AiOutlineLeft size={14} />
              <strong>1</strong>
              <AiOutlineRight size={14} />
            </Pager>
            <Outlined $width={118} $spread>
              <select aria-label="Page size"><option>50/page</option></select>
              <AiOutlineDown size={14} color="#999" />
            </Outlined>
            <ToolGap $width={19} />
            <MdSettings size={24} />
          </TableTools>
        </Card>
        <OrdersTable />
        <ScrollX><Thumb /><Arrow $dir="right" /></ScrollX>
      </Page>
      <ScrollY><Arrow $dir="up" /><Thumb /><ToolGap $width={11} /><Arrow $dir="down" /></ScrollY>
      <Mask />
      <SideMenu />
      <StatusBubble>flipkarthl-fk-demo.demodashboardsandbox2.shipsy.io/ops/dashboard/setup/rider-managem...</StatusBubble>
    </Viewport>
    <WindowsBar />
  </Desktop>
);

export default App;
